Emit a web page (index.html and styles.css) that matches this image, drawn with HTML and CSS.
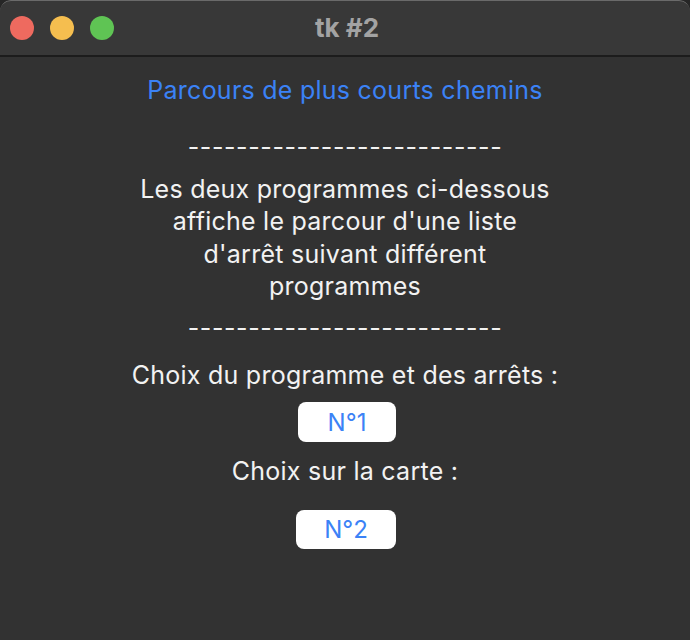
FILE: index.html
```
<!DOCTYPE html>
<html lang="fr">
<head>
<meta charset="utf-8">
<title>tk #2</title>
<link rel="stylesheet" href="styles.css">
</head>
<body>
<div class="window">
  <div class="titlebar">
    <div class="lights">
      <span class="light red"></span>
      <span class="light yellow"></span>
      <span class="light green"></span>
    </div>
    <div class="wtitle">tk #2</div>
  </div>
  <div class="content">
    <div class="heading">Parcours de plus courts chemins</div>
    <div class="dashes first">--------------------------</div>
    <div class="para">Les deux programmes ci-dessous<br>affiche le parcour d'une liste<br>d'arrêt suivant différent<br>programmes</div>
    <div class="dashes second">--------------------------</div>
    <div class="label l1">Choix du programme et des arrêts :</div>
    <button class="btn b1">N°1</button>
    <div class="label l2">Choix sur la carte :</div>
    <button class="btn b2">N°2</button>
  </div>
</div>
</body>
</html>
```
FILE: styles.css
```
html, body {
  margin: 0;
  padding: 0;
  background: #262626;
  height: 100%;
}
body {
  font-family: Inter, "Noto Sans", sans-serif;
  color: #f2f2f2;
}
.window {
  height: 640px;
  background: #323232;
  border-radius: 11px 11px 0 0;
  overflow: hidden;
}
.titlebar {
  position: relative;
  background: #383838;
  border-bottom: 2px solid #1c1c1c;
  border-top: 1px solid #6a6a6a;
  border-radius: 11px 11px 0 0;
  box-sizing: border-box;
  height: 57px;
  display: flex;
  align-items: center;
  justify-content: center;
}
.lights {
  position: absolute;
  left: 10px;
  top: 15px;
  display: flex;
  gap: 16px;
}
.light {
  width: 24px;
  height: 24px;
  border-radius: 50%;
  display: block;
}
.red { background: #ee6a5f; }
.yellow { background: #f5be4f; }
.green { background: #5fc454; }
.wtitle {
  font-size: 26px;
  font-weight: 700;
  color: #a3a3a3;
  margin-top: -2px;
  margin-left: 4px;
}
.content {
  display: flex;
  flex-direction: column;
  align-items: center;
  text-align: center;
  font-size: 25px;
  line-height: 32px;
  letter-spacing: 0.25px;
  padding-top: 17px;
}
.heading {
  color: #3b82f6;
}
.dashes {
  letter-spacing: 0.6px;
}
.dashes.first { margin-top: 25px; }
.para { margin-top: 10px; line-height: 32.3px; }
.dashes.second { margin-top: 10px; }
.label.l1 { margin-top: 15px; }
.btn {
  font-family: inherit;
  font-size: 24px;
  color: #3b82f6;
  background: #ffffff;
  border: none;
  border-radius: 8px;
  width: 98px;
  height: 40px;
  padding: 0;
}
.b1 { margin-top: 11px; margin-left: 4px; }
.label.l2 { margin-top: 13px; }
.b2 { margin-top: 23px; width: 100px; height: 39px; margin-left: 2px; }
```
